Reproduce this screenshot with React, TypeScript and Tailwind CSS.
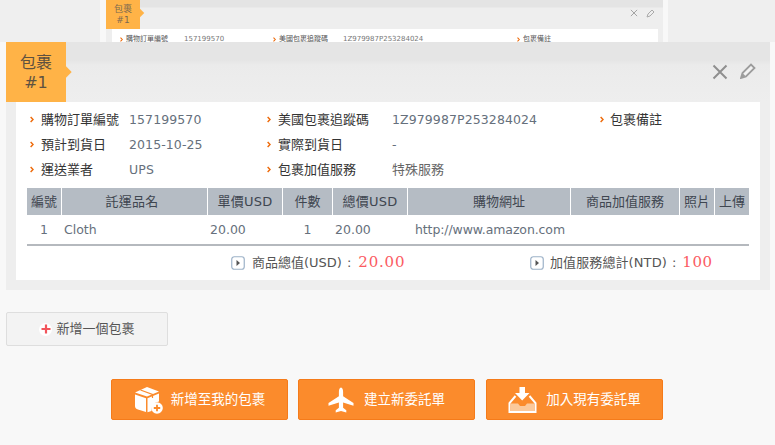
import React from 'react';

const FONT = "font-['DejaVu_Sans','Noto_Sans_CJK_TC',sans-serif]";

// Small orange chevron in front of the info labels
const Chevron = ({ small }: { small?: boolean }) => (
  <svg viewBox="0 0 5 8" className={small ? 'h-[5px] w-[3px] shrink-0' : 'h-[7px] w-[4px] shrink-0'}>
    <path d="M0.800 0.800l3 3.200-3 3.200" fill="none" stroke="#ee6a0a" strokeWidth="1.800" />
  </svg>
);

const Info = ({ label, value, labelClass }: { label: string; value?: string; labelClass: string }) => (
  <div className="flex h-[25px] items-center">
    <Chevron />
    <span className={`whitespace-nowrap text-[13px] text-[#333] ${labelClass}`}>{label}</span>
    {value && <span className="whitespace-nowrap pt-[2px] text-[12.500px] tracking-[0.1px] text-[#66707c]">{value}</span>}
  </div>
);

const columns = [
  { title: '編號', cell: 'w-[34px]' },
  { title: '託運品名', cell: 'w-[145px] pr-[5px] tracking-[0.3px]' },
  { title: '單價USD', cell: 'w-[74px] tracking-[0.2px]' },
  { title: '件數', cell: 'w-[49px]' },
  { title: '總價USD', cell: 'w-[74px] tracking-[0.2px]' },
  { title: '購物網址', cell: 'w-[162px] pl-[20px]' },
  { title: '商品加值服務', cell: 'w-[108px]' },
  { title: '照片', cell: 'w-[34px]' },
  { title: '上傳', cell: 'w-[34px]' },
];

const PlayBox = () => (
  <svg viewBox="0 0 14 14" className="h-[14px] w-[14px] shrink-0">
    <rect x="0.750" y="0.750" width="12.500" height="12.500" rx="2.500" fill="#fff" stroke="#9db2c8" strokeWidth="1.200" />
    <path d="M5.500 4l3.500 3-3.500 3z" fill="#555" />
  </svg>
);

const BoxIcon = () => (
  <svg viewBox="0 0 29 28" className="h-[28px] w-[29px] shrink-0">
    <path d="M1 6.500L13 1l12 4.500L13 10.500z" fill="#fff" />
    <path d="M1 8.500l11 3.800V26L4 23.500Q1 22.500 1 20z" fill="#fff" />
    <path d="M13.500 12.300L25 7.500v8a8.500 8.500 0 0 0-7.500 9.500l-4 1.300z" fill="#fff" />
    <path d="M6.500 4L18.500 8.500v3.500" fill="none" stroke="#fb8a2b" strokeWidth="1.200" />
    <circle cx="23" cy="22" r="5.800" fill="#fff" />
    <path d="M23 18.800v6.400M19.800 22h6.400" stroke="#fb8a2b" strokeWidth="1.800" />
  </svg>
);

const PlaneIcon = () => (
  <svg viewBox="0 0 26 26" className="h-[26px] w-[26px] shrink-0">
    <path d="M13 0.500c1.500 0 2.100 2.300 2.100 4.500v4.300L25.500 16v2.800l-10.400-3.200v5.100l3.200 2.500v2.300L13 24l-5.300 1.500v-2.300l3.200-2.500v-5.100L0.500 18.800V16l10.400-6.700V5c0-2.200.6-4.500 2.100-4.500z" fill="#fff" />
  </svg>
);

const InboxIcon = () => (
  <svg viewBox="0 0 29 26" className="h-[26px] w-[29px] shrink-0">
    <path d="M11.500 0h5.500v6h4.500l-7.300 7.500L7 6h4.500z" fill="#fff" />
    <path d="M7.500 9L1.500 16v9h26v-9l-6-7" fill="none" stroke="#fff" strokeWidth="2" />
    <path d="M3 16.500h7l2 2.500h5l2-2.500h7V24H3z" fill="#fbc99b" />
  </svg>
);

const OrangeButton = ({ icon, label, className }: { icon: React.ReactNode; label: string; className: string }) => (
  <button className={`flex h-[41px] w-[177px] items-center justify-center rounded-[2px] border border-[#f57b1a] bg-[#fb8b2c] text-[13.500px] text-white ${className}`}>
    {icon}
    <span className="whitespace-nowrap">{label}</span>
  </button>
);

export default function App() {
  return (
    <div className={`relative h-[445px] w-[775px] overflow-hidden bg-[#f8f8f8] ${FONT}`}>
      {/* Faded copy of the card above the current one */}
      <div className="flex h-[42px] bg-[#efefef]">
        <div className="ml-[100px] w-[568px] bg-[#f8f8f8] px-[6px]">
          <div className="h-[42px] w-[557px] overflow-hidden bg-[#eee]">
            <div className="flex h-[29px] bg-[linear-gradient(#e4e4e4_0,#e4e4e4_7px,#eeeeee_8px)]">
              <div className="relative flex w-[34px] flex-col items-center justify-center bg-[#ffb347] text-[9px] leading-[11px] text-[#7d6a50]">
                <span>包裹</span>
                <span>#1</span>
                <span className="absolute right-[-3px] top-[10px] h-[6px] w-[6px] rotate-45 bg-[#ffb347]" />
              </div>
              <div className="ml-auto flex items-start gap-[8px] pr-[8px] pt-[9px]">
                <svg viewBox="0 0 9 9" className="h-[8px] w-[8px]"><path d="M1 1l7 7M8 1L1 8" stroke="#999" strokeWidth="1" /></svg>
                <svg viewBox="0 0 9 9" className="h-[9px] w-[9px]"><path d="M1 8l1-3 4-4 2 2-4 4z" fill="none" stroke="#aaa" strokeWidth="1" /></svg>
              </div>
            </div>
            <div className="ml-[6px] flex h-[13px] w-[546px] items-start bg-white pt-[6px] text-[7px] leading-[9px] text-[#555]">
              <div className="ml-[8px] flex w-[153px] items-center gap-[3px]">
                <Chevron small />
                <span className="w-[55px]">購物訂單編號</span>
                <span className="text-[#777]">157199570</span>
              </div>
              <div className="flex w-[244px] items-center gap-[3px]">
                <Chevron small />
                <span className="w-[61px]">美國包裹追蹤碼</span>
                <span className="text-[#777]">1Z979987P253284024</span>
              </div>
              <div className="flex items-center gap-[3px]">
                <Chevron small />
                <span>包裹備註</span>
              </div>
            </div>
          </div>
        </div>
      </div>

      {/* Package card */}
      <div className="ml-[6px] h-[248px] w-[764px] bg-[#eeeeee]">
        <div className="flex h-[60px] bg-[linear-gradient(#e5e5e5_0,#e5e5e5_18px,#ebebeb_23px,#eeeeee_60px)]">
          <div className="relative flex w-[60px] flex-col items-center justify-center bg-[#ffb347] pt-[1px] text-[16px] leading-[20px] text-[#5e5140]">
            <span>包裹</span>
            <span>#1</span>
            <span className="absolute right-[-4px] top-[26px] h-[8px] w-[8px] rotate-45 bg-[#ffb347]" />
          </div>
          <div className="ml-auto flex items-start gap-[12px] pr-[14px] pt-[22px]">
            <svg viewBox="0 0 16 16" className="h-[16px] w-[16px]">
              <path d="M1.500 1.500l13 13M14.500 1.500l-13 13" stroke="#8f8f8f" strokeWidth="2" />
            </svg>
            <svg viewBox="0 0 16 16" className="h-[16px] w-[16px] -translate-y-px">
              <path d="M1 15l1.500-5L11 1.500l3.500 3.500L6 13.500z" fill="#f2f2f2" stroke="#9c9c9c" strokeWidth="1.800" />
              <path d="M1 15l1.500-5L6 13.500z" fill="#9c9c9c" />
            </svg>
          </div>
        </div>

        <div className="ml-[10px] h-[178px] w-[744px] bg-white px-[11px] pt-[5px]">
          <div className="flex pl-[3px]">
            <div className="w-[237px]">
              <Info label="購物訂單編號" value="157199570" labelClass="ml-[7px] w-[88px]" />
              <Info label="預計到貨日" value="2015-10-25" labelClass="ml-[7px] w-[88px]" />
              <Info label="運送業者" value="UPS" labelClass="ml-[7px] w-[88px]" />
            </div>
            <div className="w-[333px]">
              <Info label="美國包裹追蹤碼" value="1Z979987P253284024" labelClass="ml-[7px] w-[114px]" />
              <Info label="實際到貨日" value="-" labelClass="ml-[7px] w-[114px]" />
              <div className="flex h-[25px] items-center">
                <Chevron />
                <span className="ml-[7px] w-[114px] whitespace-nowrap text-[13px] text-[#333]">包裹加值服務</span>
                <span className="whitespace-nowrap text-[13px] text-[#666]">特殊服務</span>
              </div>
            </div>
            <Info label="包裹備註" labelClass="ml-[6px]" />
          </div>

          {/* Item table */}
          <div className="mt-[6px] w-[722px]">
            <div className="flex h-[27px] gap-px">
              {columns.map((col) => (
                <div
                  key={col.title}
                  className={`${col.cell} flex items-center justify-center whitespace-nowrap bg-[#b5bcc4] text-[13px] text-[#3f4650]`}
                >
                  {col.title}
                </div>
              ))}
            </div>
            <div className="flex h-[29px] items-center gap-px pt-[1px] text-[12.500px] text-[#66707c]">
              <div className="w-[34px] text-center">1</div>
              <div className="w-[145px] pl-[2px]">Cloth</div>
              <div className="w-[74px] pl-[2px]">20.00</div>
              <div className="w-[49px] text-center">1</div>
              <div className="w-[74px] pl-[2px]">20.00</div>
              <div className="w-[162px] whitespace-nowrap pl-[7px] tracking-[-0.1px]">http://www.amazon.com</div>
            </div>
            <div className="h-[2px] bg-[#b5b9be]" />
          </div>

          {/* Totals */}
          <div className="flex h-[33px] items-center pl-[204px] text-[13px] text-[#555]">
            <div className="flex w-[299px] items-center">
              <PlayBox />
              <span className="ml-[7px] whitespace-nowrap">商品總值(USD)</span>
              <span className="ml-[5px] mr-[7px]">:</span>
              <span className="font-['DejaVu_Serif',serif] text-[15px] tracking-[0.8px] text-[#fb5b62]">20.00</span>
            </div>
            <div className="flex items-center">
              <PlayBox />
              <span className="ml-[6px] whitespace-nowrap tracking-[0.1px]">加值服務總計(NTD)</span>
              <span className="ml-[5px] mr-[6px]">:</span>
              <span className="font-['DejaVu_Serif',serif] text-[15px] tracking-[0.6px] text-[#fb5b62]">100</span>
            </div>
          </div>
        </div>
      </div>

      {/* Add package */}
      <button className="ml-[6px] mt-[22px] flex h-[34px] w-[162px] items-center justify-center rounded-[2px] border border-[#dedede] bg-[#f3f3f3] text-[13px] text-[#555]">
        <span className="mr-[4px] flex h-[13px] w-[13px] items-center justify-center rounded-full bg-white">
          <svg viewBox="0 0 10 10" className="h-[10px] w-[10px]">
            <path d="M5 0.500v9M0.500 5h9" stroke="#f2545b" strokeWidth="2.200" />
          </svg>
        </span>
        新增一個包裹
      </button>

      <div className="ml-[111px] mt-[33px] flex gap-[10px]">
        <OrangeButton icon={<BoxIcon />} label="新增至我的包裹" className="gap-[8px]" />
        <OrangeButton icon={<PlaneIcon />} label="建立新委託單" className="gap-[10px]" />
        <OrangeButton icon={<InboxIcon />} label="加入現有委託單" className="ml-px gap-[9px]" />
      </div>
    </div>
  );
}
